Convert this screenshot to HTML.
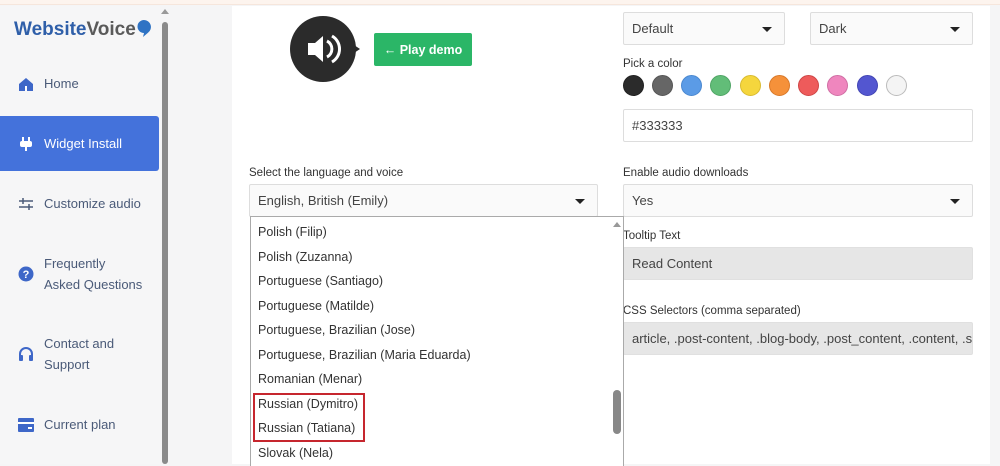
<!DOCTYPE html>
<html><head><meta charset="utf-8"><style>
*{box-sizing:border-box;margin:0;padding:0}
body{width:1000px;height:464px;overflow:hidden;background:#f5f5f6;font-family:"Liberation Sans",sans-serif;color:#333;position:relative}
.top{position:absolute;left:0;top:0;width:1000px;height:5px;background:#fdf4ee;border-bottom:1px solid #f6e6dc}
.side{position:absolute;left:0;top:6px;width:160px;height:458px;background:#f6f6f7}
.logo{position:absolute;left:14px;top:19px;font-weight:bold;font-size:19px;letter-spacing:0}
.nav{position:absolute;left:44px;font-size:13px;color:#4a5a78;line-height:21px}
.ico{position:absolute;left:18px;width:16px;height:16px}
.active{position:absolute;left:0;top:116px;width:159px;height:55px;background:#4472db;border-radius:0 3px 3px 0}
.sb{position:absolute;left:162px;top:22px;width:6px;height:442px;background:#8a8a8a;border-radius:3px}
.main{position:absolute;left:232px;top:6px;width:758px;height:458px;background:#fff}
.lbl{position:absolute;font-size:11.5px;color:#333}
.inp{position:absolute;border:1px solid #ddd;border-radius:2px;background:#fafafa;font-size:13px;padding-left:8px;display:flex;align-items:center;color:#444}
.inp.g{background:#e6e6e6;border-color:#e0e0e0}
.car{position:absolute;right:12px;top:50%;margin-top:-2px;border:5px solid transparent;border-top:5px solid #222;border-bottom:0}
.dot{position:absolute;top:75px;width:21px;height:21px;border-radius:50%}
.list{position:absolute;left:250px;top:216px;width:374px;height:250px;background:#fff;border:1px solid #aaa;border-bottom:0}
.it{position:absolute;left:7px;font-size:12.5px;color:#333}
</style></head><body>
<div class="top"></div>
<div class="side"></div>
<div class="logo"><span style="color:#2f5fa9">Website</span><span style="color:#5a5a5a">Voice</span></div>
<svg style="position:absolute;left:137px;top:20px" width="14" height="17" viewBox="0 0 14 17"><path d="M7 0a7 7 0 0 1 4 12.7L6 17l1-4A6.5 6.5 0 0 1 7 0z" fill="#2f73c4"/></svg>
<div class="active"></div>
<svg class="ico" style="top:76px" viewBox="0 0 16 16"><path d="M1 8 8 2l7 6v7H1z" fill="#3e67c8"/><rect x="7" y="10" width="2" height="5" fill="#fff"/></svg>
<div class="nav" style="top:73px">Home</div>
<svg class="ico" style="top:136px" viewBox="0 0 16 16"><rect x="4" y="1" width="2" height="4" fill="#fff"/><rect x="10" y="1" width="2" height="4" fill="#fff"/><rect x="2" y="5" width="12" height="6" rx="2" fill="#fff"/><rect x="7" y="11" width="2" height="4" fill="#fff"/></svg>
<div class="nav" style="top:133px;color:#fff">Widget Install</div>
<svg class="ico" style="top:196px" viewBox="0 0 16 16"><path d="M1 5h14M1 11h14" stroke="#4a5a78" stroke-width="1.5"/><path d="M5 2v6M11 8v6" stroke="#4a5a78" stroke-width="1.5"/></svg>
<div class="nav" style="top:193px">Customize audio</div>
<svg class="ico" style="top:266px" viewBox="0 0 16 16"><circle cx="8" cy="8" r="7.5" fill="#3e67c8"/><text x="8" y="12" font-size="11" font-weight="bold" fill="#fff" text-anchor="middle" font-family="Liberation Sans">?</text></svg>
<div class="nav" style="top:253px">Frequently<br>Asked Questions</div>
<svg class="ico" style="top:346px" viewBox="0 0 16 16"><path d="M2 11V8a6 6 0 0 1 12 0v3" stroke="#3e67c8" stroke-width="2" fill="none"/><rect x="1" y="9" width="4" height="6" rx="1" fill="#3e67c8"/><rect x="11" y="9" width="4" height="6" rx="1" fill="#3e67c8"/></svg>
<div class="nav" style="top:333px">Contact and<br>Support</div>
<svg class="ico" style="top:417px" viewBox="0 0 16 16"><rect x="0" y="1" width="16" height="14" rx="1" fill="#3e67c8"/><rect x="0" y="5" width="16" height="2" fill="#fff"/><rect x="10" y="10" width="4" height="2" fill="#fff"/></svg>
<div class="nav" style="top:414px">Current plan</div>
<div style="position:absolute;left:161px;top:9px;border:4px solid transparent;border-bottom:5px solid #999;border-top:0"></div>
<div class="sb"></div>

<div class="main"></div>
<svg style="position:absolute;left:290px;top:15px" width="80" height="70" viewBox="0 0 80 70"><circle cx="33" cy="34" r="33" fill="#2b2b2b"/><path d="M64 30l6 4-6 4z" fill="#2b2b2b"/><path d="M18 28h7l8-7v26l-8-7h-7z" fill="#fff"/><path d="M37 26a9 9 0 0 1 0 16M42 21a15 15 0 0 1 0 26" stroke="#fff" stroke-width="3" fill="none"/></svg>
<div style="position:absolute;left:374px;top:33px;width:98px;height:33px;background:#2bb667;border-radius:2px;color:#fff;font-weight:bold;font-size:12.5px;display:flex;align-items:center;justify-content:center">&larr; Play demo</div>

<div class="inp" style="left:623px;top:12px;width:162px;height:33px">Default<span class="car"></span></div>
<div class="inp" style="left:810px;top:12px;width:163px;height:33px">Dark<span class="car"></span></div>
<div class="lbl" style="left:623px;top:58px">Pick a color</div>
<div class="dot" style="left:623px;background:#2b2b2b;border:1px solid #222"></div>
<div class="dot" style="left:652px;background:#666;border:1px solid #555"></div>
<div class="dot" style="left:681px;background:#5b9be6;border:1px solid #4a88d0"></div>
<div class="dot" style="left:710px;background:#62bd78;border:1px solid #4fa565"></div>
<div class="dot" style="left:740px;background:#f5d63d;border:1px solid #d9bb30"></div>
<div class="dot" style="left:769px;background:#f5913a;border:1px solid #d8792a"></div>
<div class="dot" style="left:798px;background:#ee5b5b;border:1px solid #cf4646"></div>
<div class="dot" style="left:827px;background:#ef86be;border:1px solid #d06ea4"></div>
<div class="dot" style="left:857px;background:#5356d0;border:1px solid #4245b4"></div>
<div class="dot" style="left:886px;background:#f4f4f4;border:1px solid #bbb"></div>
<div class="inp" style="left:623px;top:109px;width:350px;height:33px;background:#fff">#333333</div>

<div class="lbl" style="left:249px;top:167px">Select the language and voice</div>
<div class="inp" style="left:249px;top:184px;width:349px;height:33px">English, British (Emily)<span class="car"></span></div>
<div class="lbl" style="left:623px;top:167px">Enable audio downloads</div>
<div class="inp" style="left:623px;top:184px;width:350px;height:33px">Yes<span class="car"></span></div>
<div class="lbl" style="left:623px;top:230px">Tooltip Text</div>
<div class="inp g" style="left:623px;top:247px;width:350px;height:33px">Read Content</div>
<div class="lbl" style="left:623px;top:305px">CSS Selectors (comma separated)</div>
<div class="inp g" style="left:623px;top:322px;width:350px;height:33px;overflow:hidden;white-space:nowrap">article, .post-content, .blog-body, .post_content, .content, .se</div>

<div class="list">
<div class="it" style="top:8px">Polish (Filip)</div>
<div class="it" style="top:33px">Polish (Zuzanna)</div>
<div class="it" style="top:57px">Portuguese (Santiago)</div>
<div class="it" style="top:82px">Portuguese (Matilde)</div>
<div class="it" style="top:106px">Portuguese, Brazilian (Jose)</div>
<div class="it" style="top:131px">Portuguese, Brazilian (Maria Eduarda)</div>
<div class="it" style="top:155px">Romanian (Menar)</div>
<div class="it" style="top:180px">Russian (Dymitro)</div>
<div class="it" style="top:204px">Russian (Tatiana)</div>
<div class="it" style="top:229px">Slovak (Nela)</div>
<div style="position:absolute;left:2px;top:176px;width:112px;height:49px;border:2px solid #c6262e"></div>
<div style="position:absolute;left:362px;top:5px;border:4px solid transparent;border-bottom:5px solid #999;border-top:0"></div>
<div style="position:absolute;left:362px;top:173px;width:8px;height:44px;background:#888;border-radius:4px"></div>
</div>
</body></html>
